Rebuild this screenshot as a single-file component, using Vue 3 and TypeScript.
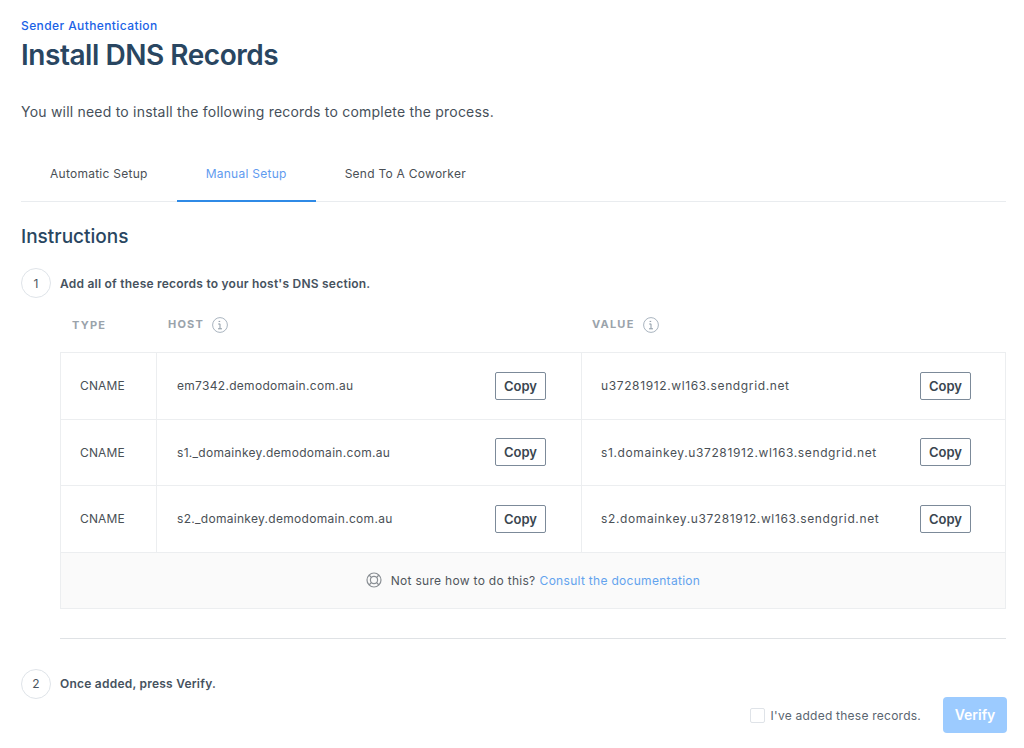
<template>
  <div class="page">
    <div class="eyebrow">Sender Authentication</div>
    <h1 class="title">Install DNS Records</h1>
    <p class="intro">You will need to install the following records to complete the process.</p>

    <div class="tabs">
      <div v-for="tab in tabs" :key="tab" class="tab" :class="{ active: tab === 'Manual Setup' }">{{ tab }}</div>
    </div>

    <h2 class="subtitle">Instructions</h2>

    <div class="step">
      <div class="step-num">1</div>
      <div class="step-text">Add all of these records to your host's DNS section.</div>
    </div>

    <div class="records">
      <div class="head">
        <div class="head-type">TYPE</div>
        <div class="head-host">
          HOST
          <svg class="info" viewBox="0 0 16 16" width="16" height="16">
            <circle cx="8" cy="8" r="7.4" fill="none" stroke="#a9b4bf" />
            <path d="M6.6 4.4h1.6M8 6.8v5M6.2 7h1.8M6 11.8h4" fill="none" stroke="#8d9aa6" />
          </svg>
        </div>
        <div class="head-value">
          VALUE
          <svg class="info" viewBox="0 0 16 16" width="16" height="16">
            <circle cx="8" cy="8" r="7.4" fill="none" stroke="#a9b4bf" />
            <path d="M6.6 4.4h1.6M8 6.8v5M6.2 7h1.8M6 11.8h4" fill="none" stroke="#8d9aa6" />
          </svg>
        </div>
      </div>

      <div class="table">
        <div v-for="row in rows" :key="row.host" class="row">
          <div class="cell type">CNAME</div>
          <div class="cell host">
            <span>{{ row.host }}</span>
            <button class="copy">Copy</button>
          </div>
          <div class="cell value">
            <span>{{ row.value }}</span>
            <button class="copy">Copy</button>
          </div>
        </div>
        <div class="help">
          <svg class="buoy" viewBox="0 0 16 16" width="16" height="16">
            <circle cx="8" cy="8" r="7" fill="none" stroke="#8a8f94" stroke-width="1.2" />
            <circle cx="8" cy="8" r="3.6" fill="none" stroke="#8a8f94" stroke-width="1.2" />
            <path d="M3 3l2.5 2.5M13 3l-2.5 2.5M3 13l2.5-2.5M13 13l-2.5-2.5" stroke="#8a8f94" stroke-width="1.2" />
          </svg>
          <span>Not sure how to do this?</span>
          <a class="link">Consult the documentation</a>
        </div>
      </div>
    </div>

    <div class="divider"></div>

    <div class="step">
      <div class="step-num">2</div>
      <div class="step-text">Once added, press Verify.</div>
    </div>

    <div class="actions">
      <label class="check">
        <span class="box"></span>
        I've added these records.
      </label>
      <button class="verify">Verify</button>
    </div>
  </div>
</template>

<script setup lang="ts">
const tabs = ['Automatic Setup', 'Manual Setup', 'Send To A Coworker']

const rows = [
  { host: 'em7342.demodomain.com.au', value: 'u37281912.wl163.sendgrid.net' },
  { host: 's1._domainkey.demodomain.com.au', value: 's1.domainkey.u37281912.wl163.sendgrid.net' },
  { host: 's2._domainkey.demodomain.com.au', value: 's2.domainkey.u37281912.wl163.sendgrid.net' },
]
</script>

<style>
html,
body {
  background: #fff;
  overflow: hidden;
}
</style>

<style scoped>
.page {
  width: 985px;
  height: 748px;
  padding: 18px 0 0 21px;
  font-family: Inter, "Liberation Sans", sans-serif;
  color: #3f4a55;
  box-sizing: content-box;
}

.eyebrow {
  font-size: 12px;
  line-height: 15px;
  font-weight: 500;
  letter-spacing: 0.4px;
  color: #1a62e6;
}

.title {
  margin: 3px 0 0;
  font-size: 28px;
  line-height: 38px;
  font-weight: 600;
  letter-spacing: -0.46px;
  color: #294661;
}

.intro {
  margin: 28px 0 0;
  font-size: 14px;
  line-height: 20px;
  letter-spacing: 0.21px;
  color: #46505a;
}

.tabs {
  display: flex;
  margin-top: 24px;
  height: 55px;
  border-bottom: 1px solid #e9ecef;
}

.tab {
  padding: 0 29px;
  height: 56px;
  display: flex;
  align-items: center;
  font-size: 12px;
  color: #4a4f55;
  letter-spacing: 0.26px;
  border-bottom: 2px solid transparent;
  box-sizing: border-box;
}

.tab.active {
  color: #5f9bef;
  border-bottom-color: #2f8ae6;
}

.subtitle {
  margin: 23px 0 0;
  font-size: 19px;
  line-height: 24px;
  font-weight: 500;
  color: #294661;
}

.step {
  display: flex;
  align-items: center;
  gap: 9px;
  margin-top: 19px;
}

.step-num {
  width: 30px;
  height: 30px;
  border: 1px solid #dfe4e9;
  border-radius: 50%;
  display: flex;
  align-items: center;
  justify-content: center;
  font-size: 12px;
  color: #4a5560;
  box-sizing: border-box;
}

.step-text {
  font-size: 12px;
  font-weight: 600;
  letter-spacing: 0.23px;
  color: #46525e;
}

.records {
  margin-left: 39px;
}

.head {
  display: grid;
  grid-template-columns: 96px 425px 425px;
  height: 54px;
  padding-top: 15px;
  font-size: 11px;
  font-weight: 700;
  letter-spacing: 1.2px;
  color: #9aa3ab;
  box-sizing: border-box;
}

.head-type {
  padding: 5px 0 0 12px;
}

.head-host,
.head-value {
  display: flex;
  align-items: flex-start;
  gap: 8px;
  padding: 4px 0 0 12px;
}

.head-value {
  padding-left: 11px;
}

.info {
  flex: none;
}

.table {
  border: 1px solid #eceef0;
  width: 946px;
  box-sizing: border-box;
}

.row {
  display: grid;
  grid-template-columns: 95px 425px 1fr;
  height: 66.5px;
  border-bottom: 1px solid #eceef0;
  box-sizing: border-box;
}

.cell {
  display: flex;
  align-items: center;
  justify-content: space-between;
  padding: 0 34px 0 20px;
  font-size: 12px;
  color: #4a5056;
  border-left: 1px solid #eceef0;
  letter-spacing: 0.3px;
}

.cell.type {
  border-left: 0;
  padding-left: 19px;
  padding-right: 0;
  letter-spacing: 0.12px;
}

.cell.host {
  padding-right: 35px;
}

.cell.value {
  padding-left: 19px;
  letter-spacing: 0.62px;
}

.copy {
  flex: none;
  width: 51px;
  height: 28px;
  padding: 0;
  background: #fff;
  border: 1px solid #7c8a99;
  border-radius: 2px;
  font-family: inherit;
  font-size: 13px;
  font-weight: 600;
  letter-spacing: 0;
  color: #3a4650;
}

.help {
  height: 55px;
  background: #fafafa;
  display: flex;
  align-items: center;
  justify-content: center;
  font-size: 12px;
  color: #50565c;
  letter-spacing: 0.3px;
}

.buoy {
  margin-right: 9px;
}

.link {
  margin-left: 4px;
  color: #63a3ee;
}

.divider {
  margin: 29px 0 0 39px;
  width: 946px;
  border-top: 1px solid #dfe2e5;
}

.divider + .step {
  margin-top: 30px;
}

.actions {
  display: flex;
  justify-content: flex-end;
  align-items: center;
  margin-top: -2px;
}

.check {
  display: flex;
  align-items: center;
  gap: 6px;
  margin-top: 2px;
  font-size: 12px;
  letter-spacing: 0.24px;
  color: #5a6570;
  margin-right: 22px;
}

.box {
  width: 15px;
  height: 15px;
  border: 1px solid #dfe3e8;
  border-radius: 2px;
  box-sizing: border-box;
}

.verify {
  width: 64px;
  height: 36px;
  margin-right: -1px;
  border: 0;
  border-radius: 4px;
  background: #9ccbff;
  color: #fff;
  font-family: inherit;
  font-size: 14px;
  font-weight: 600;
}
</style>
